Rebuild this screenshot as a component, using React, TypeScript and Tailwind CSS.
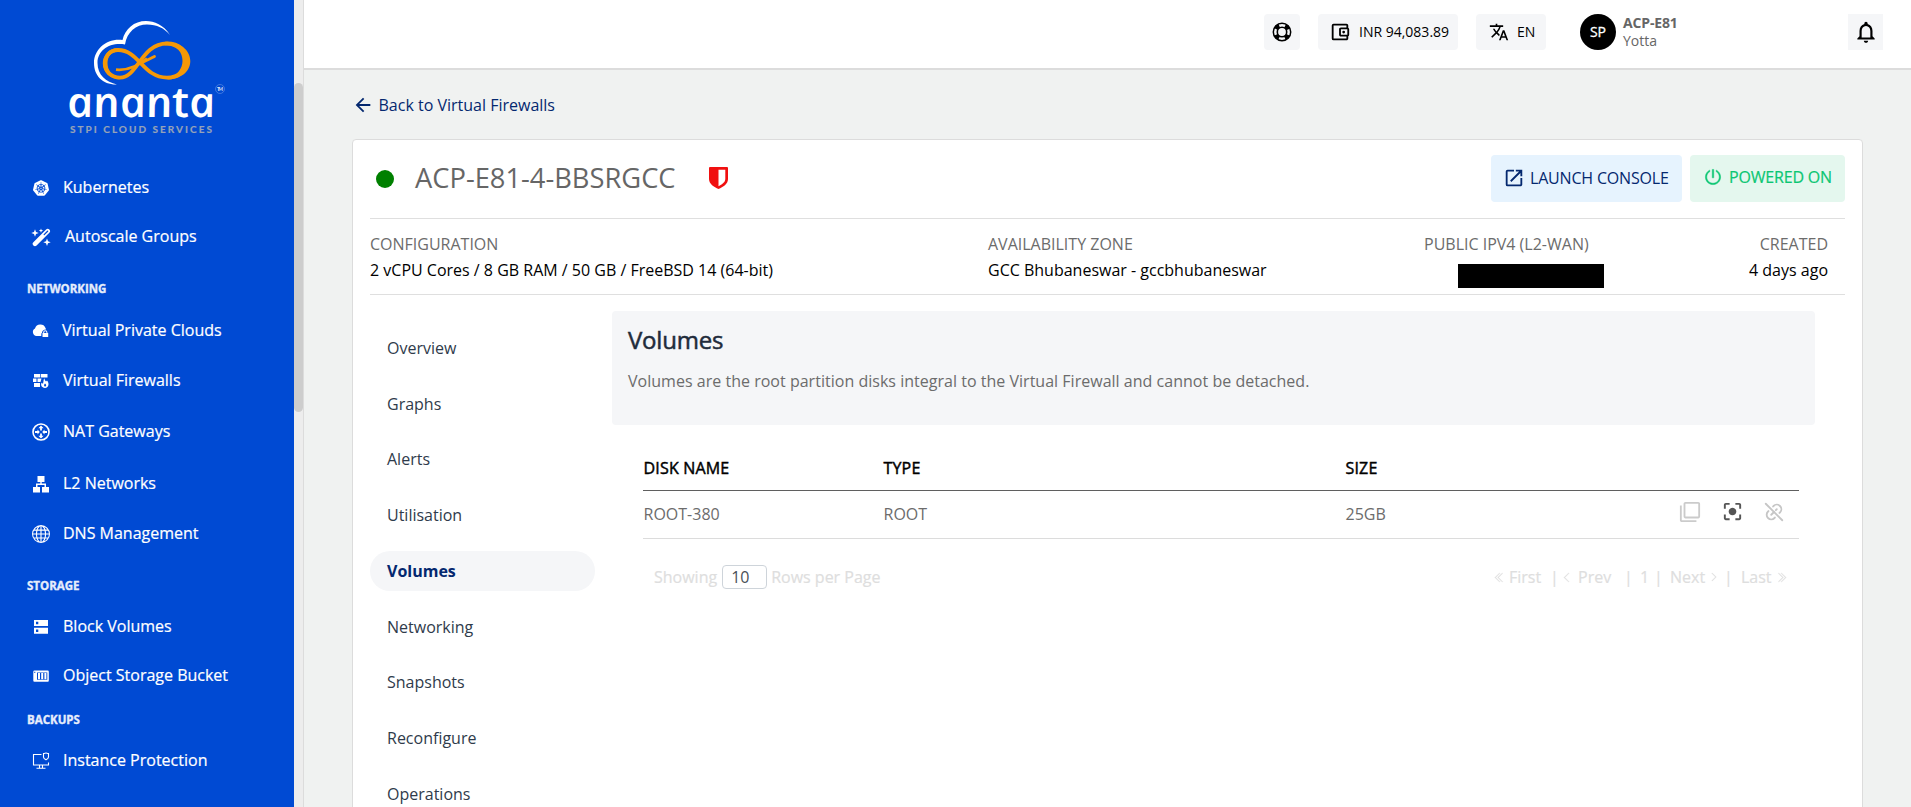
import type { ReactNode } from "react";
import {
  MdArrowBack,
  MdCenterFocusStrong,
  MdFilterNone,
  MdNotificationsNone,
  MdOpenInNew,
  MdOutlineAccountBalanceWallet,
  MdTranslate,
} from "react-icons/md";
import { AiOutlinePoweroff } from "react-icons/ai";
import { TbLinkOff } from "react-icons/tb";
import { SiKubernetes } from "react-icons/si";
import { BsChevronDoubleLeft, BsChevronDoubleRight, BsChevronLeft, BsChevronRight, BsGlobe } from "react-icons/bs";

function Logo() {
  return (
    <svg className="block" width="200" height="120" viewBox="42 16 200 120">
      <path
        fill="#fff"
        d="M170 35C164 25 154 21 146 21C134 21 125 29 122.500 40C107 38 94 49 94 63C94 76 103 85 117 84.500C106 82 97.500 75 97.500 63C97.500 50 110 42 125 44.500C127 32 136 24.500 147 24.500C157 24.500 164 28 170 35Z"
      />
      <g fill="none" stroke="#f59807" strokeLinecap="round">
        <path
          strokeWidth="3.800"
          d="M118 50C110 50 105 56 105 63.500C105 71 111 77.600 120 77.600C138 77.600 141 43.500 167 43.500C179 43.500 187 51 187 61C187 71 178 77.600 167 77.600C143 77.600 139 50 118 50Z"
        />
        <path strokeWidth="2.800" strokeLinecap="butt" d="M116 69.700C131 71 141 63 147 58.500" />
        <path strokeWidth="2.800" d="M141 63.500C146 60 150 59 154.500 56.500" />
      </g>
      <path
        fill="#f59807"
        d="M165 41.700C180 41.700 190.300 50 190.300 61C190.300 72 180 79.600 167 79.600C178 75 182.500 68 182.500 61C182.500 52 177 45.500 165 45.300Z"
      />
      <path fill="#f59807" d="M118 48.200C108 48.200 102.800 56 102.800 63.500C102.800 72 110 79.400 120 79.400C111 75 107.500 70 107.500 63C107.500 57 111 52 118 51.800Z" />
      <text
        transform="translate(69.500 117) skewX(12)"
        fill="#fff"
        className="font-['Open_Sans'] text-[42px] font-semibold italic"
        textLength="148"
        lengthAdjust="spacingAndGlyphs"
      >
        ananta
      </text>
      <circle cx="220" cy="89" r="4.500" fill="none" stroke="#7aa0e8" strokeWidth="0.500" />
      <text x="217" y="91" fill="#d5e1f8" className="font-[Lato] text-[5px] font-bold" textLength="6">
        TM
      </text>
      <text
        x="70"
        y="132.500"
        fill="#96a3b8"
        stroke="#96a3b8"
        strokeWidth="0.200"
        className="font-[Lato] text-[10px] font-bold"
        textLength="142"
      >
        STPI CLOUD SERVICES
      </text>
    </svg>
  );
}

function Glyph({ children }: { children: ReactNode }) {
  return (
    <svg className="block" width="18" height="18" viewBox="0 0 18 18" fill="#fff">
      {children}
    </svg>
  );
}

const Wand = () => (
  <svg className="block shrink-0" width="20" height="19" viewBox="0 0 20 19" fill="#fff">
    <path stroke="#fff" strokeWidth="4.600" strokeLinecap="round" d="M4 15.800L16.700 3.200" />
    <path stroke="#004ad3" strokeWidth="1.300" strokeLinecap="round" d="M13.200 6.600L16.600 3.300" />
    <path d="M4 1.300L5 4L7.700 5L5 6L4 8.700L3 6L0.300 5L3 4ZM10 0.500L10.600 2L12.100 2.600L10.600 3.200L10 4.700L9.400 3.200L7.900 2.600L9.400 2ZM16 10.500L17 13.200L19.700 14.200L17 15.200L16 17.900L15 15.200L12.300 14.200L15 13.200Z" />
  </svg>
);

const CloudLock = () => (
  <Glyph>
    <path d="M4.500 14A4 4 0 0 1 3 6.500A5.600 5.600 0 0 1 13.500 6C13.700 6.600 14 7 14 7.500C11.500 7.500 10 9 10 10.800C9.300 11.300 9.300 12 9.300 14Z" />
    <path fillRule="evenodd" d="M10.500 11H11.200V10.300A2.100 2.100 0 0 1 15.400 10.300V11H16.200V15H10.500ZM12.200 11H14.400V10.300A1.100 1.100 0 0 0 12.200 10.300Z" />
  </Glyph>
);

const Firewall = () => (
  <Glyph>
    <path d="M2 2H8.300V5.500H2ZM9 2H15.500V5.500H9ZM1 6.500H4.500V10H1ZM5.500 6.500H9.500L8.500 10H5.500ZM2 11H8V15H2Z" />
    <path
      fillRule="evenodd"
      d="M12.500 6.300C12.500 8 13 8.500 14 9.500L15 8.500C17.500 11 17 15.700 13 15.900C9.500 15.900 8.500 13 9.500 10.800L11 11.800C11.800 10 11 8 12.500 6.300ZM13 11.500C11.500 13 12 14.500 13 14.500C14.300 14.500 14.800 13 13 11.500Z"
    />
  </Glyph>
);

const Nat = () => (
  <Glyph>
    <circle cx="9" cy="9" r="8" fill="none" stroke="#fff" strokeWidth="1.600" />
    <path d="M9 2.500L11.600 5.300H9.900V7.500H8.100V5.300H6.400ZM9 15.500L11.600 12.700H9.900V10.500H8.100V12.700H6.400ZM7.800 9L5.500 6.500V8.100H3V9.900H5.500V11.500ZM10.200 9L12.500 6.500V8.100H15V9.900H12.500V11.500Z" />
  </Glyph>
);

const Tree = () => (
  <Glyph>
    <path d="M5.500 1H12.500V7H9.700V8.500H14V12H17V17.500H10V12H12.500V10H5.500V12H8V17.500H1V12H4V8.500H8.300V7H5.500Z" />
  </Glyph>
);

const Server = () => (
  <Glyph>
    <path fillRule="evenodd" d="M2 2H16V8H2ZM4 3.800V6.200H6.300V3.800ZM2 9.800H16V15.800H2ZM4 11.600V14H6.300V11.600Z" />
  </Glyph>
);

const Bucket = () => (
  <Glyph>
    <path fillRule="evenodd" d="M2.500 3.500H15.500A1.200 1.200 0 0 1 16.800 4.700V13.500A1.200 1.200 0 0 1 15.500 14.800H2.500A1.200 1.200 0 0 1 1.300 13.500V4.700A1.200 1.200 0 0 1 2.500 3.500ZM5 5.500V12.800H15.300V5.500Z" />
    <path d="M6 6H8V12.300H6ZM9.200 6H11.200V12.300H9.200ZM12.400 6H14.400V12.300H12.400Z" />
    <path fill="#004ad3" d="M2.300 4.800H3.300V6H2.300Z" />
  </Glyph>
);

const Monitor = () => (
  <Glyph>
    <path
      fill="none"
      stroke="#fff"
      strokeWidth="1.100"
      d="M9.500 2.500H1.500V13H16.500V10.500M7.500 13V16M10.500 13V16M4.500 16.200H13.500M11.500 1.500C13 1.500 13 1 14 1C15 1 15 1.500 16.500 1.500V5C16.500 6.500 15 7.300 14 7.800C13 7.300 11.500 6.500 11.500 5Z"
    />
  </Glyph>
);

const LifeBuoy = () => (
  <svg className="block" width="20" height="20" viewBox="0 0 20 20" fill="none" stroke="#000">
    <circle cx="10" cy="10" r="8.700" strokeWidth="1.500" />
    <circle cx="10" cy="10" r="4.700" strokeWidth="1.600" />
    <circle cx="10" cy="10" r="6.800" strokeWidth="4.200" strokeDasharray="4.600 6.080" strokeDashoffset="-3.040" />
  </svg>
);

const nav = [
  { label: "Kubernetes", icon: <SiKubernetes className="size-4" />, row: "mt-[39px]", text: "ml-[13px]" },
  { label: "Autoscale Groups", icon: <Wand />, row: "mt-[25px]", text: "ml-[15px]" },
  { label: "NETWORKING", row: "mt-[29px]" },
  { label: "Virtual Private Clouds", icon: <CloudLock />, row: "mt-[17px]", text: "ml-[12px]" },
  { label: "Virtual Firewalls", icon: <Firewall />, row: "mt-[26px]", text: "ml-[13px]" },
  { label: "NAT Gateways", icon: <Nat />, row: "mt-[27px]", text: "ml-[13px]" },
  { label: "L2 Networks", icon: <Tree />, row: "mt-[28px]", text: "ml-[13px]" },
  { label: "DNS Management", icon: <BsGlobe className="size-[18px]" />, row: "mt-[26px]", text: "ml-[13px]" },
  { label: "STORAGE", row: "mt-[29px]" },
  { label: "Block Volumes", icon: <Server />, row: "mt-[16px]", text: "ml-[13px]" },
  { label: "Object Storage Bucket", icon: <Bucket />, row: "mt-[25px]", text: "ml-[13px]" },
  { label: "BACKUPS", row: "mt-[21px]" },
  { label: "Instance Protection", icon: <Monitor />, row: "mt-[16px]", text: "ml-[13px]" },
];

function Sidebar() {
  return (
    <aside className="flex shrink-0">
      <nav className="w-[294px] bg-[#004ad3] text-white">
        <div className="pt-4 pl-[42px]">
          <Logo />
        </div>
        {nav.map((n) =>
          n.icon ? (
            <div key={n.label} className={`flex h-6 items-center pl-8 ${n.row}`}>
              <span className="mt-[2px] flex w-[18px] justify-center">{n.icon}</span>
              <span className={`whitespace-nowrap [-webkit-text-stroke:0.200px] ${n.text}`}>{n.label}</span>
            </div>
          ) : (
            <div
              key={n.label}
              className={`flex h-6 items-center pl-[27px] text-[11.500px] font-bold text-[#e6edfb] [-webkit-text-stroke:0.350px] ${n.row}`}
            >
              {n.label}
            </div>
          ),
        )}
      </nav>
      <div className="w-[10px] border-r border-[#dcdcdc] bg-[#ededed] pt-[83px]">
        <div className="h-[329px] rounded-full bg-[#cdcdcd]" />
      </div>
    </aside>
  );
}

function Header() {
  return (
    <header className="flex h-[70px] items-start border-b-2 border-[#dcdcdc] bg-white pt-[14px] pl-[960px] text-sm text-black">
      <div className="flex size-9 items-center justify-center rounded bg-[#f5f6f8]">
        <LifeBuoy />
      </div>
      <div className="ml-[18px] flex h-9 w-[140px] items-center rounded bg-[#f5f6f8] pl-[11px]">
        <MdOutlineAccountBalanceWallet className="size-[22px]" />
        <span className="ml-2 whitespace-nowrap">INR 94,083.89</span>
      </div>
      <div className="ml-[18px] flex h-9 w-[70px] items-center rounded bg-[#f5f6f8] pl-[13px]">
        <MdTranslate className="size-5" />
        <span className="ml-2">EN</span>
      </div>
      <div className="ml-[34px] flex size-9 items-center justify-center rounded-full bg-black text-white [-webkit-text-stroke:0.300px]">
        SP
      </div>
      <div className="ml-[7px] w-[225px] leading-[18px] text-[#666]">
        <div className="font-bold tracking-[-0.150px]">ACP-E81</div>
        <div>Yotta</div>
      </div>
      <div className="flex h-9 w-[35px] items-center justify-center bg-[#f5f6f8]">
        <MdNotificationsNone className="size-[26px]" />
      </div>
    </header>
  );
}

function Shield() {
  return (
    <svg className="-mt-[2px] block" width="19" height="22" viewBox="0 0 19 22">
      <path fill="#f01010" d="M1 0H18A1 1 0 0 1 19 1V12C19 17 14 20 9.500 22C5 20 0 17 0 12V1A1 1 0 0 1 1 0Z" />
      <path fill="#fff" d="M9.500 2.800H16.300V12C16.300 15 13 17.500 9.500 19.200Z" />
    </svg>
  );
}

const tabs = ["Overview", "Graphs", "Alerts", "Utilisation", "Volumes", "Networking", "Snapshots", "Reconfigure", "Operations"];

function Pagination() {
  return (
    <div className="mt-[26px] flex h-6 items-center pl-[11px] whitespace-nowrap text-[#dedede] [-webkit-text-stroke:0.200px]">
      <span>Showing</span>
      <span className="ml-[5px] flex h-6 w-[45px] items-center rounded border border-[#ced4da] pl-2 text-[#495057] [-webkit-text-stroke:0px]">
        10
      </span>
      <span className="ml-1">Rows per Page</span>
      <div className="ml-auto flex items-center pr-[12px]">
        <BsChevronDoubleLeft className="size-[11px]" strokeWidth={0.6} />
        <span className="ml-[4px] w-[41px]">First</span>
        <span className="w-[11px]">|</span>
        <BsChevronLeft className="size-[11px]" strokeWidth={0.6} />
        <span className="ml-[6px] w-[46px]">Prev</span>
        <span className="w-[16px]">|</span>
        <span className="w-[14px]">1</span>
        <span className="w-[16px]">|</span>
        <span className="w-[39px]">Next</span>
        <BsChevronRight className="size-[10px]" strokeWidth={0.6} />
        <span className="ml-[5px] w-[17px]">|</span>
        <span className="w-[35px]">Last</span>
        <BsChevronDoubleRight className="size-[11px]" strokeWidth={0.6} />
      </div>
    </div>
  );
}

function VolumesPanel() {
  return (
    <section className="ml-[17px] w-[1203px]">
      <div className="h-[114px] rounded bg-[#f5f6f8] pt-[13px] pl-4">
        <h2 className="text-2xl leading-8 tracking-[-0.200px] text-[#212b3b] [-webkit-text-stroke:0.500px]">Volumes</h2>
        <p className="mt-[13px] tracking-[0.020px] text-[#6c6c6c]">
          Volumes are the root partition disks integral to the Virtual Firewall and cannot be detached.
        </p>
      </div>
      <div className="mt-[31px] ml-[31px] w-[1156px]">
        <div className="grid h-[35px] grid-cols-[240px_462px_1fr] border-b border-[#5f5f5f] pl-[0.500px] tracking-[0.180px] text-black [-webkit-text-stroke:0.450px]">
          <span>DISK NAME</span>
          <span>TYPE</span>
          <span>SIZE</span>
        </div>
        <div className="grid h-12 grid-cols-[240px_462px_333px_1fr] items-center border-b border-[#dcdcdc] pb-px pl-[0.500px] text-[#6c6c6c]">
          <span>ROOT-380</span>
          <span>ROOT</span>
          <span>25GB</span>
          <span className="-mt-[5px] flex items-center">
            <MdFilterNone className="size-[22px] text-[#cbcbcb]" />
            <MdCenterFocusStrong className="ml-[20px] size-[23px] text-[#555]" />
            <TbLinkOff className="ml-[19px] size-[22px] text-[#c6c6c6]" strokeWidth={2} />
          </span>
        </div>
        <Pagination />
      </div>
    </section>
  );
}

export default function App() {
  return (
    <div className="flex h-[807px] w-[1911px] overflow-hidden bg-[#f0f2f1] font-['Open_Sans',sans-serif] text-base">
      <Sidebar />
      <div className="min-w-0 flex-1">
        <Header />
        <main className="pl-12">
          <a className="mt-[23px] flex h-6 items-center text-[#04286f]">
            <MdArrowBack className="size-[22px]" />
            <span className="ml-[4.500px]">Back to Virtual Firewalls</span>
          </a>
          <div className="mt-[22px] h-[720px] w-[1511px] rounded border border-[#dcdcdc] bg-white px-[17px]">
            <div className="flex h-[79px] items-start border-b border-[#dfdfdf] pt-[15px]">
              <div className="flex h-12 items-center">
                <span className="ml-[6px] size-[18px] rounded-full bg-[#008000]" />
                <h1 className="-mt-[2px] ml-[21px] w-[294px] text-[27.300px] text-[#666]">ACP-E81-4-BBSRGCC</h1>
                <Shield />
              </div>
              <button className="ml-auto flex h-[47px] w-[191px] items-center rounded bg-[#e6f3fe] pb-px pl-3 whitespace-nowrap text-[#04286f]">
                <MdOpenInNew className="size-[22px]" />
                <span className="ml-[5px] tracking-[-0.180px]">LAUNCH CONSOLE</span>
              </button>
              <button className="ml-2 flex h-[47px] w-[155px] items-center rounded bg-[#e4f7ee] pb-[3px] pl-[14px] whitespace-nowrap text-[#0cc673]">
                <AiOutlinePoweroff className="size-[18px]" stroke="currentColor" strokeWidth={30} />
                <span className="ml-[7px] tracking-[-0.180px] [-webkit-text-stroke:0.200px]">POWERED ON</span>
              </button>
            </div>
            <div className="flex h-[76px] border-b border-[#dfdfdf] pt-[12px] leading-[26px] text-black">
              <div className="w-[618px]">
                <div className="text-[#6c6c6c]">CONFIGURATION</div>
                <div>2 vCPU Cores / 8 GB RAM / 50 GB / FreeBSD 14 (64-bit)</div>
              </div>
              <div className="w-[436px]">
                <div className="text-[#6c6c6c]">AVAILABILITY ZONE</div>
                <div>GCC Bhubaneswar - gccbhubaneswar</div>
              </div>
              <div>
                <div className="text-[#6c6c6c]">PUBLIC IPV4 (L2-WAN)</div>
                <div className="mt-[7px] ml-[34px] h-6 w-[146px] bg-black" />
              </div>
              <div className="ml-auto pr-[17px] text-right">
                <div className="text-[#6c6c6c]">CREATED</div>
                <div>4 days ago</div>
              </div>
            </div>
            <div className="flex pt-4">
              <ul className="mt-[17px] flex w-[225px] shrink-0 flex-col gap-[15.720px]">
                {tabs.map((t) => (
                  <li
                    key={t}
                    className={
                      t === "Volumes"
                        ? "flex h-10 items-center rounded-full bg-[#f5f6f8] pl-[17px] font-bold text-[#04286f]"
                        : "flex h-10 items-center pl-[17px] text-[#2f3b4b]"
                    }
                  >
                    {t}
                  </li>
                ))}
              </ul>
              <VolumesPanel />
            </div>
          </div>
        </main>
      </div>
    </div>
  );
}
